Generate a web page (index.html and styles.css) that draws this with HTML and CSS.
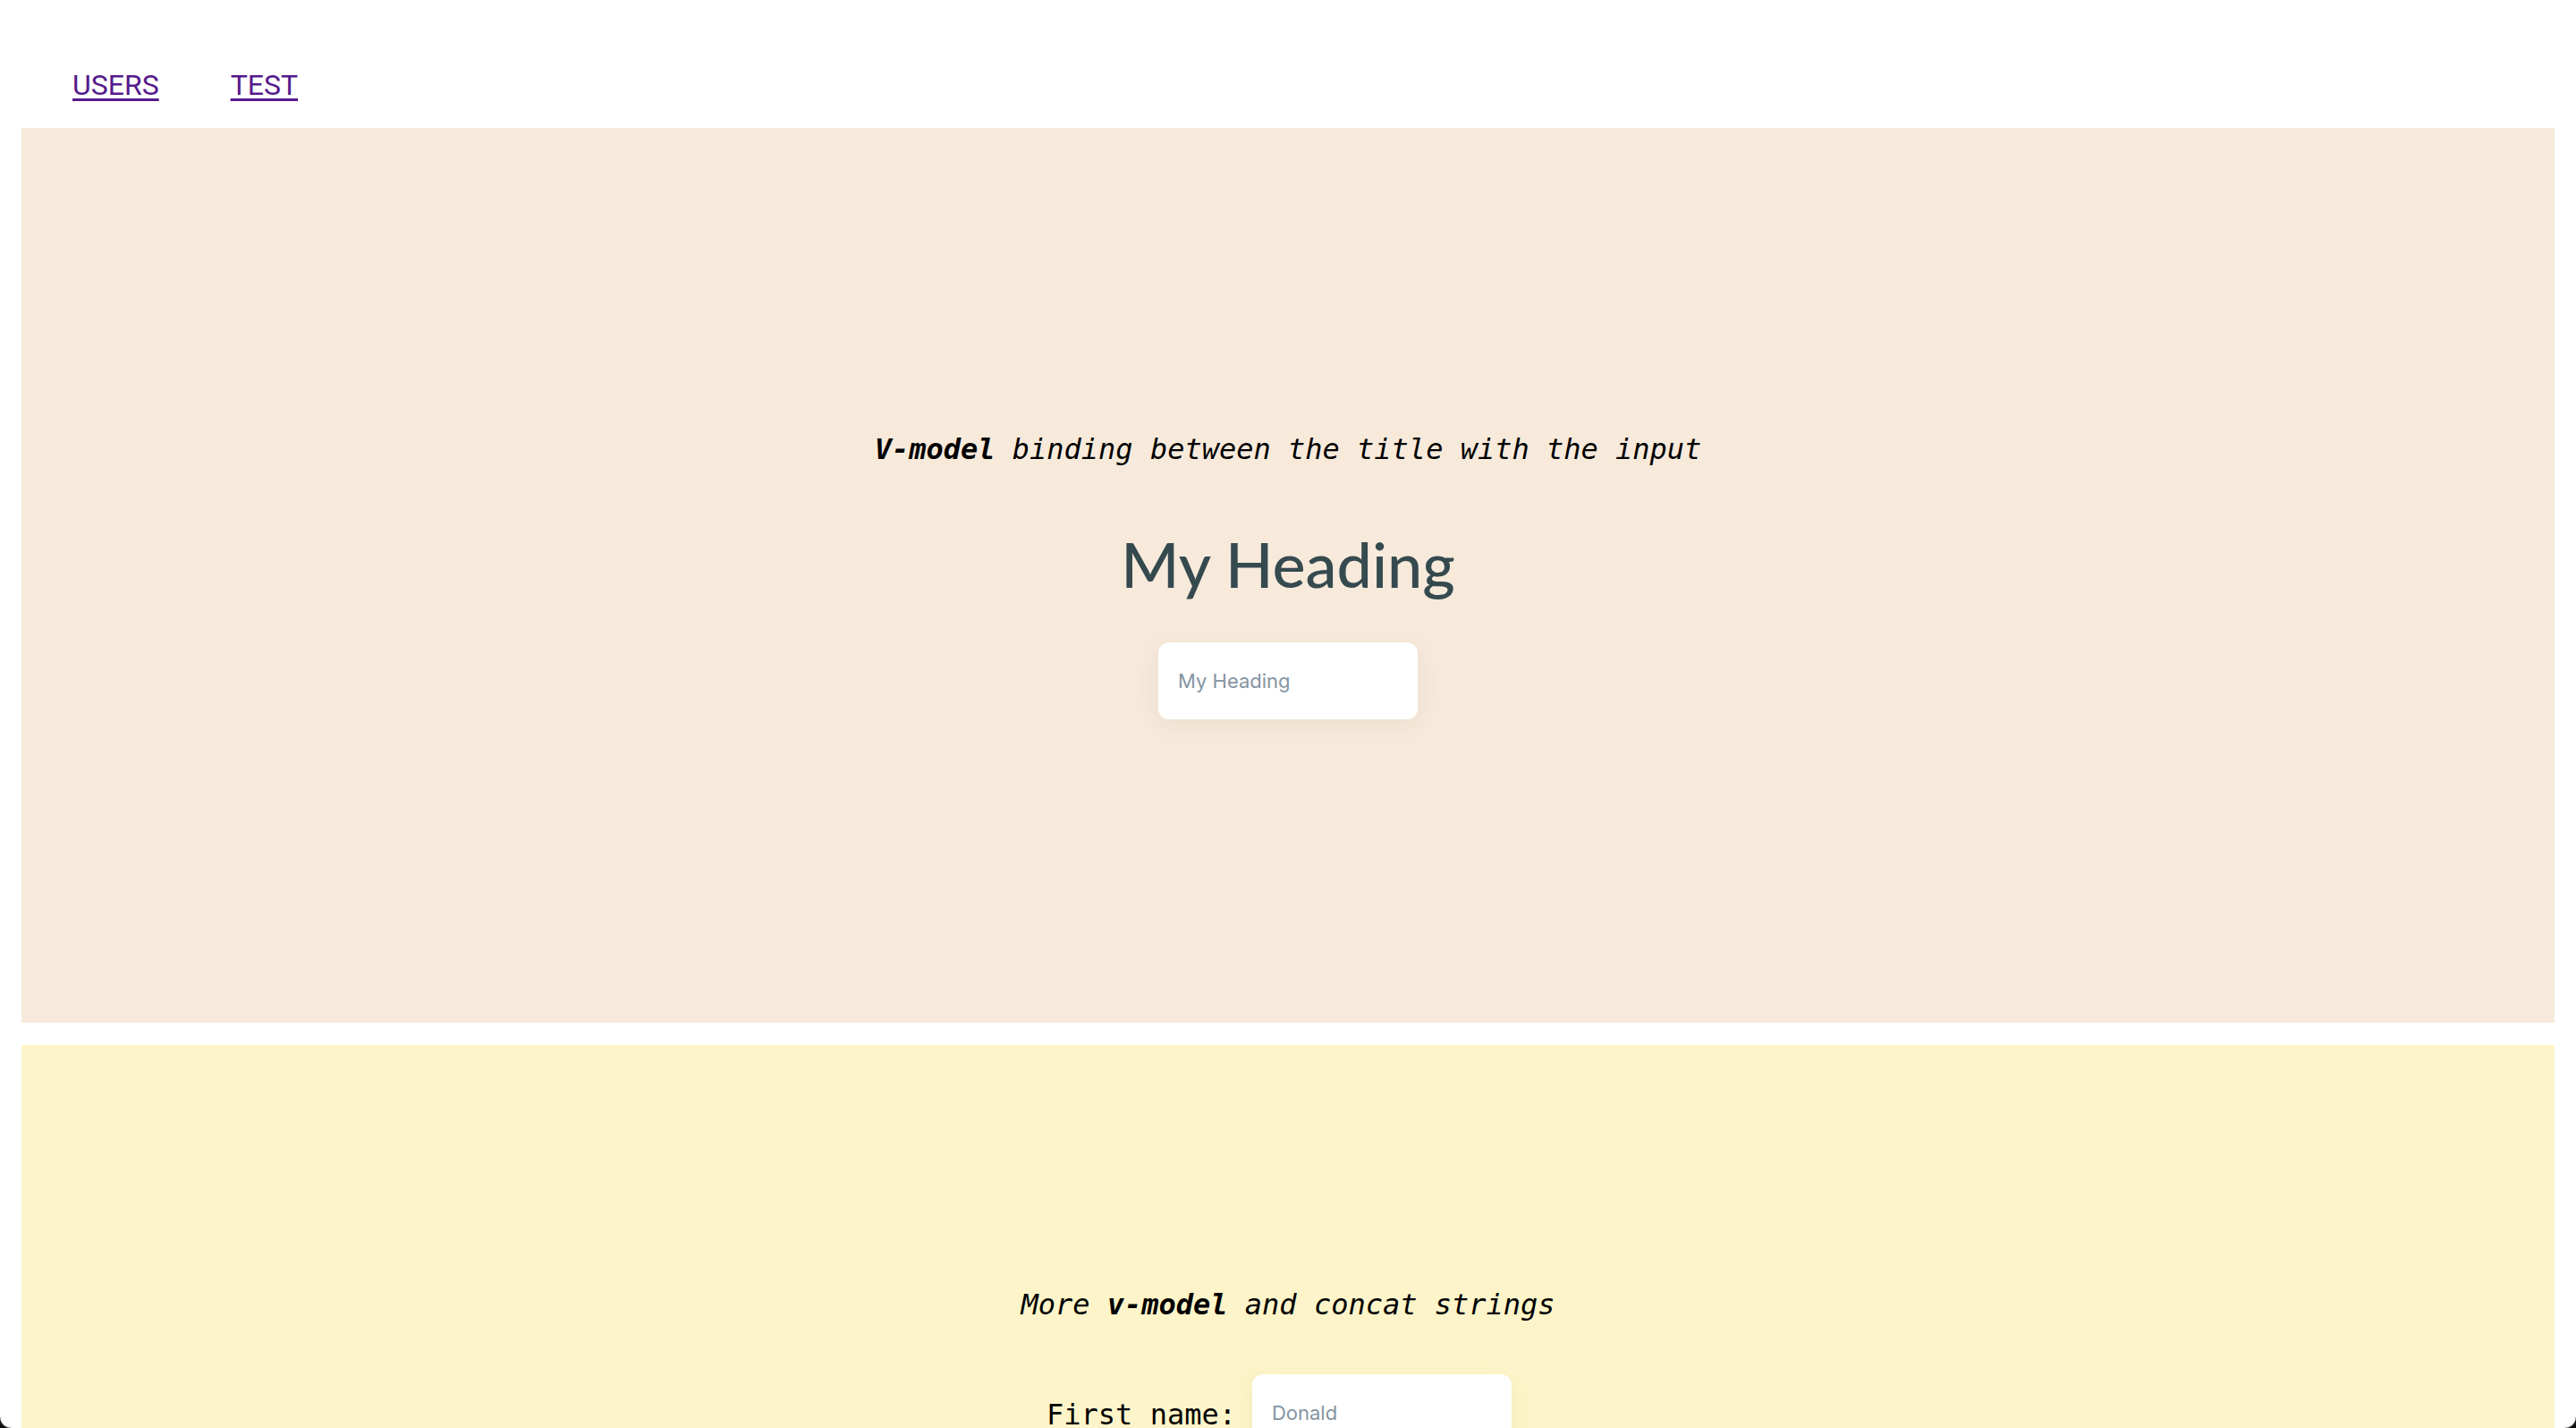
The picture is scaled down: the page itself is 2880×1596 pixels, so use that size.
FILE: index.html
```html
<!DOCTYPE html>
<html lang="en">
<head>
<meta charset="utf-8">
<title>Vue demo</title>
<link rel="stylesheet" href="styles.css">
</head>
<body>
<div class="app">
  <nav class="nav">
    <a class="nav-link" href="#users">USERS</a>
    <a class="nav-link" href="#test">TEST</a>
  </nav>
  <section class="panel panel-beige">
    <p class="caption"><b>V-model</b> binding between the title with the input</p>
    <h1 class="heading">My Heading</h1>
    <input class="field" type="text" value="My Heading">
  </section>
  <section class="panel panel-yellow">
    <p class="caption">More <b>v-model</b> and concat strings</p>
    <div class="row">
      <label class="label">First name:</label>
      <input class="field" type="text" value="Donald">
    </div>
    <div class="row">
      <label class="label">Last name:</label>
      <input class="field" type="text" value="Duck">
    </div>
    <p class="full">Donald Duck</p>
  </section>
</div>
<div class="corner corner-left"></div>
<div class="corner corner-right"></div>
</body>
</html>
```
FILE: styles.css
```css
html, body {
  margin: 0;
  padding: 0;
  background: #ffffff;
}

.app {
  display: flex;
  flex-direction: column;
  padding: 0 24px;
}

.nav {
  display: flex;
  gap: 80px;
  height: 143px;
  padding-left: 57px;
  align-items: flex-start;
  box-sizing: border-box;
  padding-top: 75px;
}

.nav-link {
  font-family: Roboto, "Liberation Sans", sans-serif;
  font-size: 32px;
  line-height: 40px;
  color: #551a8b;
  text-decoration: underline;
  text-decoration-thickness: 3px;
  text-underline-offset: 4px;
}

.panel {
  height: 1000px;
  display: flex;
  flex-direction: column;
  align-items: center;
  justify-content: center;
  box-sizing: border-box;
  flex-shrink: 0;
}

.panel-beige {
  background: #f7eadb;
}

.panel-yellow {
  background: #fdf5c9;
  margin-top: 25px;
}

.caption {
  font-family: "DejaVu Sans Mono", "Liberation Mono", monospace;
  font-style: italic;
  font-size: 32px;
  line-height: 40px;
  color: #000;
  margin: 0;
}

.caption b {
  font-weight: bold;
}

.heading {
  font-family: Lato, "Noto Sans", sans-serif;
  font-weight: 500;
  font-size: 70px;
  line-height: 80px;
  color: #354a4f;
  margin: 68px 0 48px;
}

.field {
  width: 290px;
  height: 86px;
  box-sizing: border-box;
  border: none;
  border-radius: 12px;
  background: #fff;
  padding: 0 22px;
  font-family: Inter, "Noto Sans", sans-serif;
  font-size: 22px;
  color: #8594a2;
  box-shadow: 0 6px 28px rgba(120, 90, 40, 0.08);
  outline: none;
}

.panel-yellow .caption {
  margin-bottom: 58px;
}

.row {
  display: flex;
  align-items: center;
  gap: 18px;
  margin: 0 20px 30px 0;
}

.label {
  font-family: "DejaVu Sans Mono", "Liberation Mono", monospace;
  font-size: 32px;
  line-height: 40px;
  color: #000;
  padding-top: 4px;
}

.full {
  font-family: "DejaVu Sans Mono", "Liberation Mono", monospace;
  font-size: 32px;
  margin: 92px 0 0;
}

.corner {
  position: fixed;
  bottom: 0;
  width: 12px;
  height: 12px;
}

.corner-left {
  left: 0;
  background: radial-gradient(circle at 12px 0, transparent 11px, #111 12.5px);
}

.corner-right {
  right: 0;
  background: radial-gradient(circle at 0 0, transparent 11px, #111 12.5px);
}
```
